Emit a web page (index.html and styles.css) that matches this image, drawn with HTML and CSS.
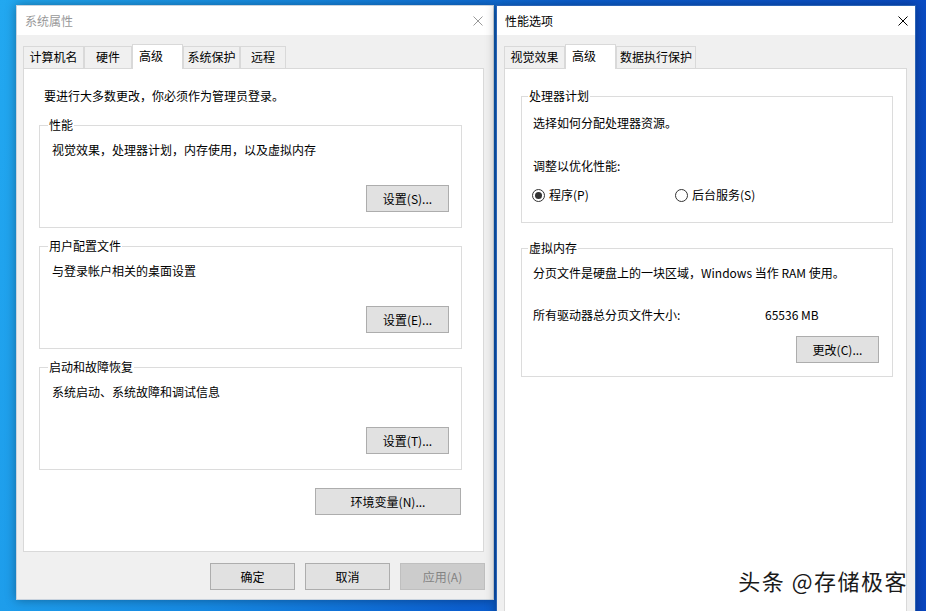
FILE: index.html
```html
<!DOCTYPE html>
<html lang="zh-CN">
<head>
  <meta charset="UTF-8">
  <title>系统属性 / 性能选项</title>
  <link rel="stylesheet" href="styles.css">
</head>
<body>
  <div class="desktop">

    <!-- 系统属性 (inactive) -->
    <div class="window window-inactive sys-props">
      <div class="titlebar">
        <span class="title">系统属性</span>
        <svg class="close-icon" width="10" height="10" viewBox="0 0 10 10"><path d="M0.5 0.5L9.5 9.5M9.5 0.5L0.5 9.5"/></svg>
      </div>
      <div class="window-body">
        <div class="tabs">
          <div class="tab tab-61">计算机名</div>
          <div class="tab tab-48">硬件</div>
          <div class="tab tab-51 active">高级</div>
          <div class="tab tab-57">系统保护</div>
          <div class="tab tab-46">远程</div>
        </div>
        <div class="tab-panel sys-panel">
          <p class="note">要进行大多数更改，你必须作为管理员登录。</p>

          <fieldset class="group">
            <legend>性能</legend>
            <div class="group-body">
              <p class="desc">视觉效果，处理器计划，内存使用，以及虚拟内存</p>
              <div class="btn-row"><button class="btn">设置(S)...</button></div>
            </div>
          </fieldset>

          <fieldset class="group">
            <legend>用户配置文件</legend>
            <div class="group-body">
              <p class="desc">与登录帐户相关的桌面设置</p>
              <div class="btn-row"><button class="btn">设置(E)...</button></div>
            </div>
          </fieldset>

          <fieldset class="group">
            <legend>启动和故障恢复</legend>
            <div class="group-body">
              <p class="desc">系统启动、系统故障和调试信息</p>
              <div class="btn-row"><button class="btn">设置(T)...</button></div>
            </div>
          </fieldset>

          <div class="env-row"><button class="btn btn-wide">环境变量(N)...</button></div>
        </div>
        <div class="dialog-buttons">
          <button class="btn">确定</button>
          <button class="btn">取消</button>
          <button class="btn btn-disabled">应用(A)</button>
        </div>
      </div>
    </div>

    <!-- 性能选项 (active) -->
    <div class="window window-active perf-opts">
      <div class="titlebar">
        <span class="title">性能选项</span>
        <svg class="close-icon" width="10" height="10" viewBox="0 0 10 10"><path d="M0.5 0.5L9.5 9.5M9.5 0.5L0.5 9.5"/></svg>
      </div>
      <div class="window-body">
        <div class="tabs">
          <div class="tab tab-61">视觉效果</div>
          <div class="tab tab-51 active">高级</div>
          <div class="tab tab-80">数据执行保护</div>
        </div>
        <div class="tab-panel perf-panel">
          <fieldset class="group">
            <legend>处理器计划</legend>
            <div class="group-body cpu-body">
              <p class="desc">选择如何分配处理器资源。</p>
              <p class="desc desc-gap">调整以优化性能:</p>
              <div class="radio-row">
                <label class="radio"><span class="radio-dot checked"></span>程序(P)</label>
                <label class="radio"><span class="radio-dot"></span>后台服务(S)</label>
              </div>
            </div>
          </fieldset>

          <fieldset class="group vm-group">
            <legend>虚拟内存</legend>
            <div class="group-body vm-body">
              <p class="desc">分页文件是硬盘上的一块区域，Windows 当作 RAM 使用。</p>
              <div class="size-row">
                <span class="size-label">所有驱动器总分页文件大小:</span>
                <span>65536 MB</span>
              </div>
              <div class="btn-row"><button class="btn">更改(C)...</button></div>
            </div>
          </fieldset>
        </div>
      </div>
    </div>

    <div class="watermark">头条 @存储极客</div>
  </div>
</body>
</html>
```

FILE: styles.css
```css
/* Reset */
* {
  margin: 0;
  padding: 0;
  box-sizing: border-box;
}

body {
  font-family: "Noto Sans CJK SC", "Microsoft YaHei", sans-serif;
  font-size: 12px;
  color: #000;
}

/* Desktop */
.desktop {
  position: relative;
  width: 926px;
  height: 611px;
  overflow: hidden;
  display: flex;
  align-items: flex-start;
  gap: 2px;
  padding: 5px 0 0 16px;
  background: linear-gradient(100deg, #22a8f0 0%, #1689e2 30%, #0c60d0 55%, #0a46c0 100%);
}

/* Windows */
.window {
  display: flex;
  flex-direction: column;
  background-color: #f0f0f0;
  border: 1px solid #c9d3de;
  box-shadow: 0 0 10px rgba(0, 0, 0, 0.35);
  flex: none;
}

.sys-props {
  width: 478px;
  height: 595px;
}

.perf-opts {
  width: 420px;
  height: 640px;
  border-color: #2a63b5;
}

.titlebar {
  height: 29px;
  flex: none;
  display: flex;
  align-items: center;
  justify-content: space-between;
  background-color: #fff;
  padding: 0 10px 0 8px;
  line-height: 16px;
}

.perf-opts .titlebar {
  padding-right: 7px;
}

.close-icon path {
  fill: none;
  stroke-width: 1;
}

.window-inactive .title {
  color: #999;
}

.window-inactive .close-icon path {
  stroke: #999;
}

.window-active .close-icon path {
  stroke: #000;
}

.window-body {
  flex: 1;
  display: flex;
  flex-direction: column;
  padding-top: 9px;
}

/* Tabs */
.tabs {
  display: flex;
  align-items: flex-end;
  height: 24px;
  padding-left: 6px;
}

.perf-opts .tabs {
  padding-left: 7px;
}

.tab {
  height: 22px;
  line-height: 20px;
  text-align: center;
  white-space: nowrap;
  border: 1px solid #d9d9d9;
  border-bottom: none;
  background-color: #f0f0f0;
}

.tab-46 { width: 46px; }
.tab-48 { width: 48px; }
.tab-51 { width: 51px; }
.tab-57 { width: 57px; }
.tab-61 { width: 61px; }
.tab-80 { width: 80px; }

.tab.active {
  height: 25px;
  margin-bottom: -1px;
  padding-left: 6px;
  text-align: left;
  line-height: 22px;
  background-color: #fff;
  position: relative;
  z-index: 1;
}

.tab-panel {
  flex: 1;
  background-color: #fff;
  border: 1px solid #d9d9d9;
}

.sys-panel {
  margin: 0 9px 0 6px;
  padding: 19px 21px 0 15px;
}

.perf-panel {
  margin: 0 8px 10px 7px;
  padding: 19px 13px 0 16px;
}

.note {
  padding-left: 5px;
  line-height: 16px;
}

/* Group boxes */
.group {
  border: 1px solid #dcdcdc;
  padding: 0;
  margin-top: 10px;
  min-width: 0;
}

.sys-panel .note + .group {
  margin-top: 13px;
}

.group legend {
  margin-left: 8px;
  padding: 0 1px;
  line-height: 16px;
}

.perf-panel .group legend {
  margin-left: 6px;
}

.perf-panel .group:first-child {
  margin-top: 0;
}

.vm-group {
  margin-top: 17px;
}

.group-body {
  padding: 9px 12px 15px;
}

.desc {
  line-height: 16px;
}

.btn-row {
  display: flex;
  justify-content: flex-end;
  margin-top: 27px;
}

.cpu-body {
  padding: 11px 13px 19px 11px;
}

.desc-gap {
  margin-top: 27px;
}

.radio-row {
  display: flex;
  margin-top: 13px;
  line-height: 16px;
}

.radio {
  width: 144px;
  display: flex;
  align-items: center;
  gap: 4px;
  margin-left: -1px;
}

.radio-dot {
  width: 13px;
  height: 13px;
  border: 1px solid #333;
  border-radius: 50%;
  display: flex;
  align-items: center;
  justify-content: center;
}

.radio-dot.checked::after {
  content: "";
  width: 7px;
  height: 7px;
  border-radius: 50%;
  background-color: #333;
}

.vm-body {
  padding: 9px 13px 13px 11px;
}

.size-row {
  display: flex;
  margin-top: 26px;
  line-height: 16px;
}

.size-label {
  width: 232px;
}

.vm-body .btn-row {
  margin-top: 13px;
}

/* Buttons */
.btn {
  width: 83px;
  height: 27px;
  border: 1px solid #adadad;
  background-color: #e1e1e1;
  font-family: inherit;
  font-size: 12px;
  color: #000;
}

.env-row {
  display: flex;
  justify-content: flex-end;
  margin-top: 18px;
  padding-right: 1px;
}

.btn-wide {
  width: 146px;
}

.dialog-buttons {
  height: 47px;
  flex: none;
  display: flex;
  justify-content: flex-end;
  gap: 10px;
  padding: 11px 8px 0 0;
}

.dialog-buttons .btn {
  width: 85px;
}

.btn-disabled {
  background-color: #cccccc;
  border-color: #bfbfbf;
  color: #838383;
}

/* Watermark over the corner */
.watermark {
  position: absolute;
  right: 18px;
  top: 567px;
  font-size: 22px;
  line-height: 26px;
  letter-spacing: 1.5px;
  color: #1a1a1a;
  text-shadow: 1px 1px 1px rgba(255, 255, 255, 0.9);
}
```
